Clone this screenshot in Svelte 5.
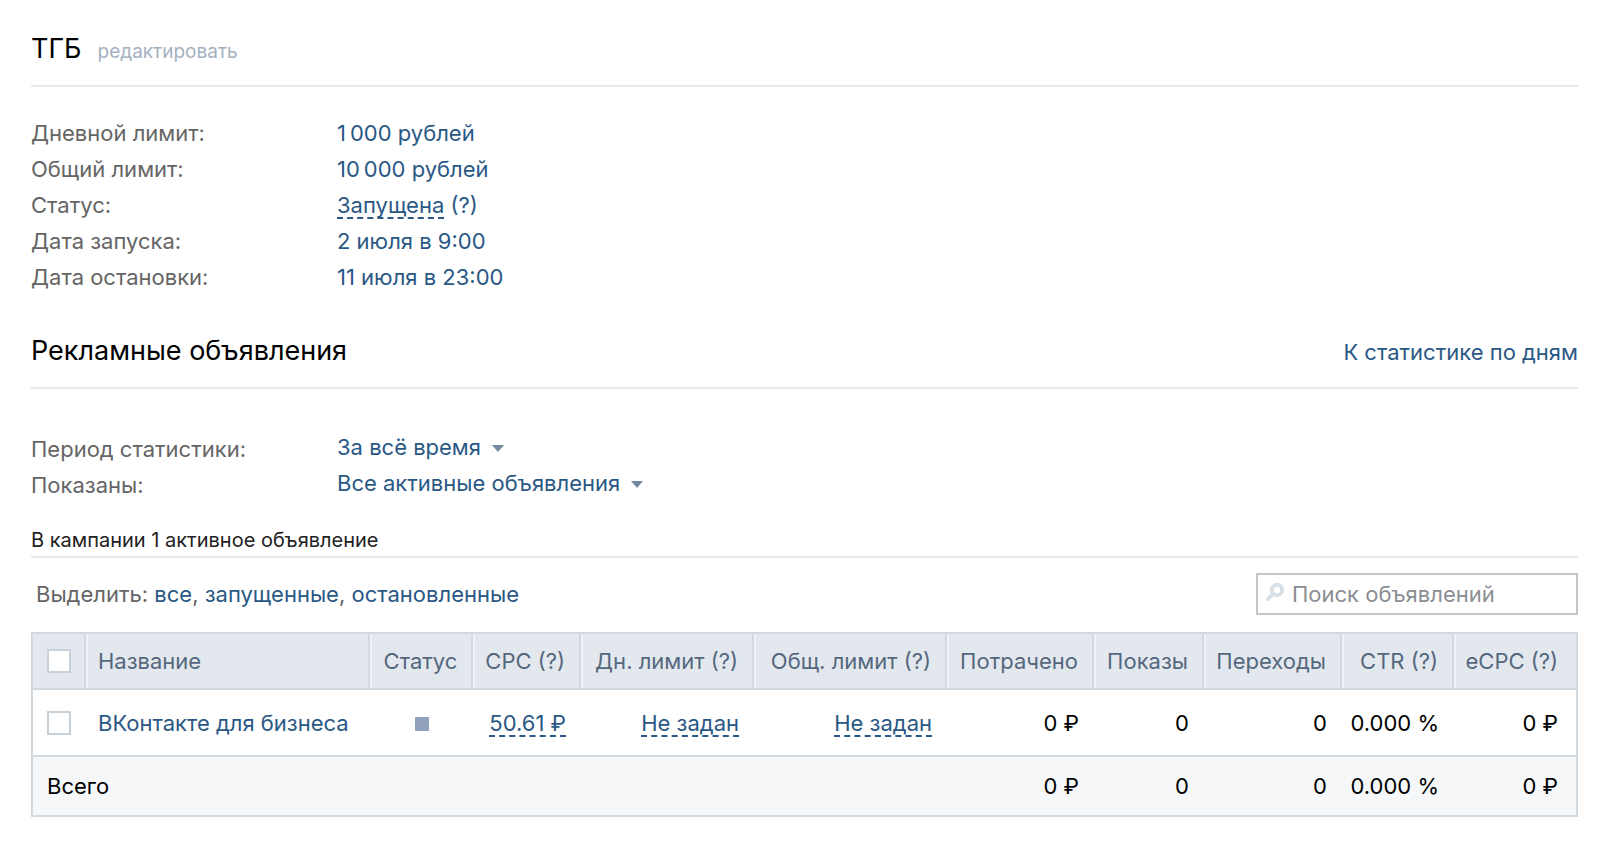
<script>
  const info = [
    { label: 'Дневной лимит:', value: '1\u2009000 рублей' },
    { label: 'Общий лимит:', value: '10\u2009000 рублей' },
    { label: 'Статус:', value: 'Запущена', editable: true, hint: '(?)' },
    { label: 'Дата запуска:', value: '2 июля в 9:00' },
    { label: 'Дата остановки:', value: '11 июля в 23:00' },
  ];

  const columns = [
    { key: 'name', title: 'Название' },
    { key: 'status', title: 'Статус' },
    { key: 'cpc', title: 'CPC (?)' },
    { key: 'day', title: 'Дн. лимит (?)' },
    { key: 'total', title: 'Общ. лимит (?)' },
    { key: 'spent', title: 'Потрачено' },
    { key: 'views', title: 'Показы' },
    { key: 'clicks', title: 'Переходы' },
    { key: 'ctr', title: 'CTR (?)' },
    { key: 'ecpc', title: 'eCPC (?)' },
  ];

  const ads = [
    {
      name: 'ВКонтакте для бизнеса',
      cpc: '50.61 ₽',
      day: 'Не задан',
      total: 'Не задан',
      stats: ['0 ₽', '0', '0', '0.000 %', '0 ₽'],
    },
  ];

  const totals = ['0 ₽', '0', '0', '0.000 %', '0 ₽'];

  let selected = $state(ads.map(() => false));
  let search = $state('');

  function selectAll(value) {
    selected = ads.map(() => value);
  }
</script>

<svelte:head>
  <title>ТГБ</title>
</svelte:head>

<main class="page">
  <header class="heading">
    <h1>ТГБ</h1>
    <a href="#edit" class="edit">редактировать</a>
  </header>

  <dl class="info">
    {#each info as row}
      <dt>{row.label}</dt>
      <dd>
        <a href="#info" class:dashed={row.editable}>{row.value}</a>
        {#if row.hint}<a href="#hint">{row.hint}</a>{/if}
      </dd>
    {/each}
  </dl>

  <header class="heading spread">
    <h2>Рекламные объявления</h2>
    <a href="#days">К статистике по дням</a>
  </header>

  <div class="filters">
    <label for="period">Период статистики:</label>
    <div class="dropdown">
      <select id="period">
        <option>За всё время</option>
      </select>
      <svg class="arrow" viewBox="0 0 14 8" aria-hidden="true"><path d="M1 0h12L7 7z" /></svg>
    </div>
    <label for="shown">Показаны:</label>
    <div class="dropdown">
      <select id="shown">
        <option>Все активные объявления</option>
      </select>
      <svg class="arrow" viewBox="0 0 14 8" aria-hidden="true"><path d="M1 0h12L7 7z" /></svg>
    </div>
  </div>

  <p class="summary">В кампании 1 активное объявление</p>

  <div class="toolbar">
    <div class="pick">
      Выделить: <button onclick={() => selectAll(true)}>все</button>,
      <button onclick={() => selectAll(true)}>запущенные</button>,
      <button onclick={() => selectAll(false)}>остановленные</button>
    </div>
    <label class="search">
      <svg viewBox="0 0 20 20" aria-hidden="true">
        <circle cx="13" cy="7" r="5.2" />
        <path d="M9 11l-5 5" />
      </svg>
      <input type="text" aria-label="Поиск объявлений" placeholder="Поиск объявлений" bind:value={search} />
    </label>
  </div>

  <table>
    <thead>
      <tr>
        <th class="check">
          <input type="checkbox" aria-label="Выделить все" onchange={(e) => selectAll(e.currentTarget.checked)} />
        </th>
        {#each columns as col}
          <th class={col.key}>{col.title}</th>
        {/each}
      </tr>
    </thead>
    <tbody>
      {#each ads as ad, i}
        <tr>
          <td class="check"><input type="checkbox" aria-label={ad.name} bind:checked={selected[i]} /></td>
          <td class="name"><a href="#ad">{ad.name}</a></td>
          <td class="status"><span class="state"></span></td>
          <td><a href="#cpc" class="dashed">{ad.cpc}</a></td>
          <td><a href="#day" class="dashed">{ad.day}</a></td>
          <td><a href="#total" class="dashed">{ad.total}</a></td>
          {#each ad.stats as value}
            <td>{value}</td>
          {/each}
        </tr>
      {/each}
    </tbody>
    <tfoot>
      <tr>
        <td class="sum" colspan="6">Всего</td>
        {#each totals as value}
          <td>{value}</td>
        {/each}
      </tr>
    </tfoot>
  </table>
</main>

<style>
  :global(body) {
    background: #fff;
  }

  .page {
    padding: 31px 32px 31px 31px;
    font-family: Inter, Roboto, 'Liberation Sans', sans-serif;
    font-size: 22px;
    line-height: 36px;
    color: #000;
  }

  a {
    color: #2a5885;
    text-decoration: none;
  }

  .dashed {
    display: inline-block;
    border-bottom: 2px dashed #2a5885;
    line-height: 24px;
  }

  /* headings */
  .heading {
    display: flex;
    align-items: baseline;
    gap: 16px;
    padding-bottom: 18px;
    border-bottom: 2px solid #e4e9ed;
  }
  .heading a {
    line-height: 28px;
  }
  .spread {
    justify-content: space-between;
  }
  h1,
  h2 {
    margin: 0;
    font-size: 27px;
    font-weight: 400;
  }
  .heading .edit {
    font-size: 19px;
    color: #a3b1c0;
  }

  /* campaign info and filters */
  .info,
  .filters {
    display: grid;
    grid-template-columns: 306px 1fr;
    color: #656565;
  }
  .info {
    margin: 28px 0 38px;
  }
  dd {
    margin: 0;
  }

  .filters {
    margin: 42px 0 23px;
  }
  .dropdown {
    display: flex;
    align-items: flex-start;
  }
  select {
    appearance: none;
    field-sizing: content;
    margin: 0;
    padding: 0 24px 0 0;
    border: 0;
    background: none;
    font: inherit;
    line-height: 32px;
    color: #2a5885;
    cursor: pointer;
  }
  .arrow {
    width: 14px;
    height: 8px;
    margin: 14px 0 0 -14px;
    fill: #7289a1;
    pointer-events: none;
  }

  .summary {
    margin: 0;
    padding-bottom: 2px;
    border-bottom: 2px solid #e7e8ec;
    font-size: 20px;
    line-height: 28px;
    color: #222;
  }

  /* toolbar */
  .toolbar {
    display: flex;
    align-items: center;
    justify-content: space-between;
    margin: 15px 0 17px;
    padding-left: 5px;
  }
  .pick {
    color: #656565;
  }
  .pick button {
    padding: 0;
    border: 0;
    background: none;
    font: inherit;
    color: #2a5885;
    cursor: pointer;
  }
  .search {
    display: flex;
    box-sizing: border-box;
    width: 322px;
    height: 42px;
    padding-left: 6px;
    gap: 8px;
    border: 2px solid #c4c5c7;
  }
  .search svg {
    flex: none;
    width: 20px;
    height: 20px;
    margin-top: 8px;
    fill: none;
    stroke: #d8e0e8;
    stroke-width: 4;
    stroke-linecap: round;
  }
  .search input {
    flex: 1;
    min-width: 0;
    padding: 0;
    border: 0;
    outline: 0;
    background: none;
    font: inherit;
  }
  .search input::placeholder {
    color: #8a8d92;
    opacity: 1;
  }

  /* ads table */
  table {
    width: 100%;
    table-layout: fixed;
    border: 2px solid #d2dae0;
    border-spacing: 0;
  }
  th,
  td {
    box-sizing: border-box;
    padding: 0 14px 0 0;
    text-align: right;
    font-weight: 400;
    white-space: nowrap;
  }
  td {
    padding-right: 15px;
  }
  th {
    height: 54px;
    border-right: 2px solid #d2dae0;
    border-left: 2px solid #eff2f6;
    background: #e3e8ef;
    color: #55677d;
  }
  th:first-child {
    border-left: 0;
  }
  th:last-child {
    border-right: 0;
  }
  tbody td {
    height: 67px;
    border-top: 2px solid #d2dae0;
  }
  tfoot td {
    height: 60px;
    border-top: 2px solid #d2dae0;
    background: #f5f7f9;
  }
  th:last-child,
  td:last-child {
    padding-right: 18px;
  }
  .check {
    width: 53px;
    padding: 0 0 0 14px;
    text-align: left;
  }
  .name {
    padding-left: 12px;
    text-align: left;
  }
  th.name {
    padding-left: 10px;
  }
  .status {
    width: 103px;
    padding: 0;
    text-align: center;
  }
  th.status {
    padding-right: 2px;
  }
  .cpc {
    width: 108px;
  }
  .day {
    width: 173px;
  }
  .total {
    width: 193px;
  }
  .spent {
    width: 147px;
  }
  .views {
    width: 110px;
  }
  .clicks {
    width: 138px;
  }
  .ctr {
    width: 112px;
  }
  .ecpc {
    width: 122px;
  }
  .sum {
    padding-left: 14px;
    text-align: left;
  }

  input[type='checkbox'] {
    appearance: none;
    display: block;
    box-sizing: border-box;
    width: 24px;
    height: 24px;
    margin: 0;
    border: 2px solid #c8d0da;
    background: #fff;
  }
  input[type='checkbox']:checked {
    background: #91a1b9;
    box-shadow: inset 0 0 0 4px #fff;
  }
  .state {
    display: inline-block;
    width: 14px;
    height: 14px;
    background: #91a1b9;
  }
</style>
